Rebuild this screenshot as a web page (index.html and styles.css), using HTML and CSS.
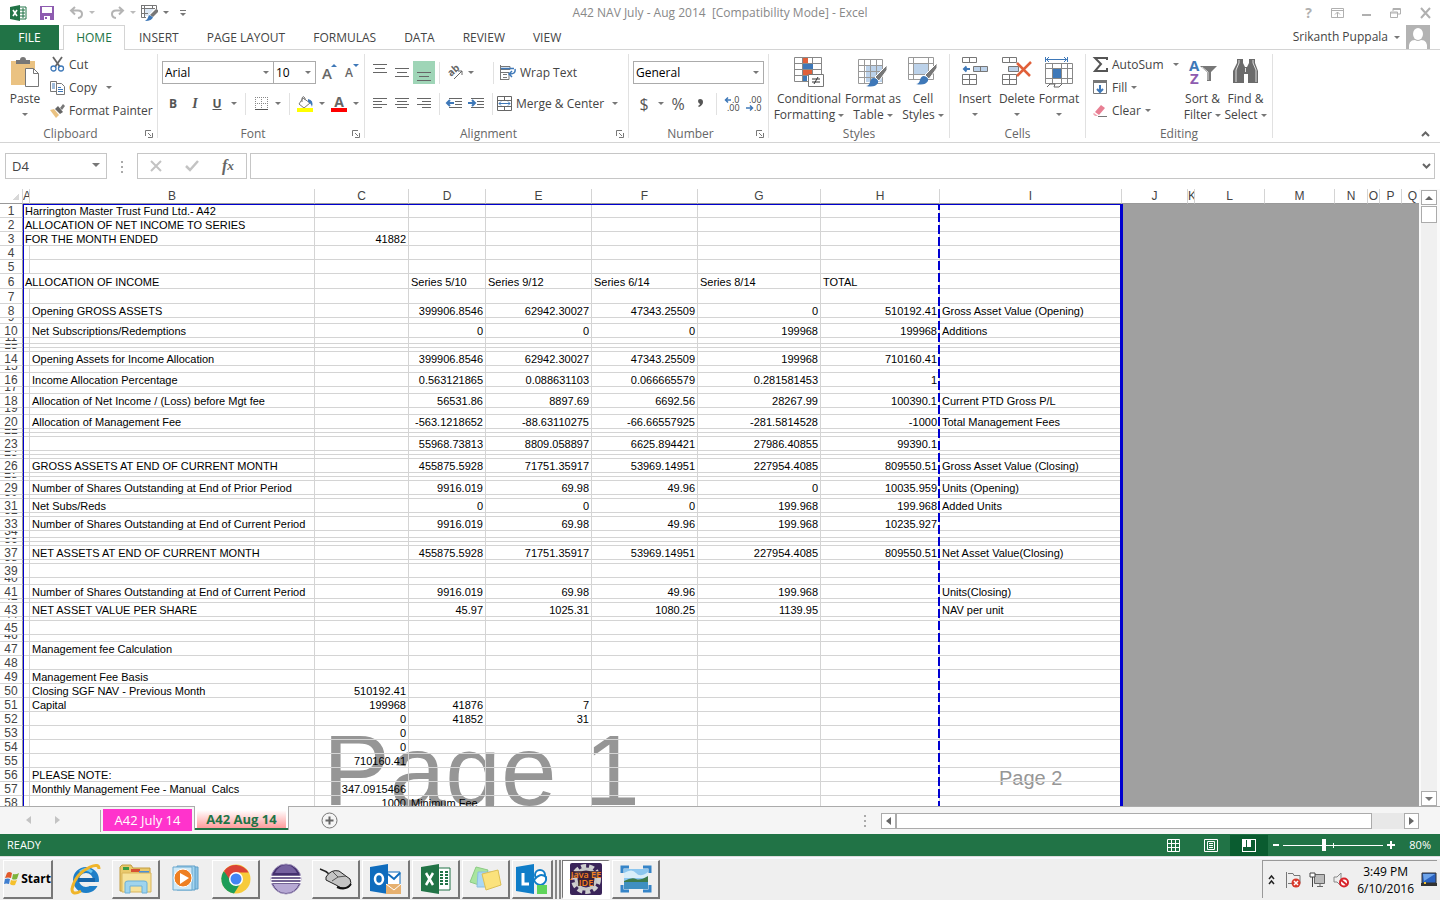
FILE: index.html
```html
<!DOCTYPE html>
<html lang="en">
<head>
<meta charset="utf-8">
<title>A42 NAV July - Aug 2014 - Excel</title>
<link rel="stylesheet" href="styles.css">
</head>
<body>
<header class="titlebar">
  <div class="quick">
    <svg class="xl" width="17" height="16" viewBox="0 0 17 16"><path d="M9 2h7v12H9z" fill="#fff" stroke="#217346"/><path d="M10 5h5M10 8h5M10 11h5M13 3v10" stroke="#217346"/><path d="M0 2l10-2v16L0 14z" fill="#217346"/><path d="M3 5l4 6M7 5l-4 6" stroke="#fff" stroke-width="1.6"/></svg>
    <button aria-label="Save"><svg width="14" height="14" viewBox="0 0 14 14"><path d="M0 0h14v14H0z" fill="#8e5cb0"/><path d="M2 1h10v6H2zM4 10h6v4H4z" fill="#fff"/><path d="M5 11h2v2H5z" fill="#8e5cb0"/></svg></button>
    <button class="dim" aria-label="Undo"><svg width="15" height="13" viewBox="0 0 15 13"><path d="M6 1L2 4.500l4 4M2 4.500h7q4 0 4 3.500t-4 4" fill="none" stroke="#b4b4b4" stroke-width="2"/></svg><i class="arrow pale"></i></button>
    <button class="dim" aria-label="Redo"><svg width="15" height="13" viewBox="0 0 15 13"><path d="M9 1l4 3.500-4 4M13 4.500H6q-4 0-4 3.500t4 4" fill="none" stroke="#b4b4b4" stroke-width="2"/></svg><i class="arrow pale"></i></button>
    <button class="tbl" aria-label="Table tool"><svg width="17" height="16" viewBox="0 0 17 16"><path d="M4 4h9l-6 7H4z" fill="#dce8f4"/><path d="M.5.500h15v4M.5 0v12.500H5M0 3.500h14M3.500 0v12M0 8.500h7M11.500 0v4" fill="none" stroke="#777"/><path d="M15 4l2 1v2l-5 5-3-2z" fill="#777"/><path d="M8 10l4 2q-1 4-8 4 3-2 4-6z" fill="#3e78b8"/></svg><i class="arrow"></i></button>
    <button class="more" aria-label="Customize toolbar"><span class="bar"></span><i class="arrow"></i></button>
  </div>
  <div class="title">A42 NAV July - Aug 2014&nbsp; [Compatibility Mode] - Excel</div>
  <div class="winbtns">
    <button aria-label="Help">?</button>
    <button aria-label="Ribbon options"><svg width="13" height="10" viewBox="0 0 13 10"><path d="M.5.5h12v9H.500zM.5 2.500h12M6.500 9V4M4 6.500L6.500 4 9 6.500" fill="none" stroke="#b0b0b0"/></svg></button>
    <button aria-label="Minimize"><svg width="10" height="10" viewBox="0 0 10 10"><path d="M0 6h9v2H0z" fill="#b0b0b0"/></svg></button>
    <button aria-label="Restore"><svg width="11" height="10" viewBox="0 0 11 10"><path d="M3 3V.5h7.500V6H8M.5 4h7v5.500h-7zM.5 5h7M3 1.500h7" fill="none" stroke="#b0b0b0"/></svg></button>
    <button aria-label="Close"><svg width="11" height="10" viewBox="0 0 11 10"><path d="M1 0l9 10M10 0L1 10" stroke="#b0b0b0" stroke-width="2"/></svg></button>
  </div>
</header>
<nav class="tabs">
  <button class="file">FILE</button>
  <button class="on">HOME</button>
  <button>INSERT</button>
  <button>PAGE LAYOUT</button>
  <button>FORMULAS</button>
  <button>DATA</button>
  <button>REVIEW</button>
  <button>VIEW</button>
  <div class="user"><span>Srikanth Puppala</span><i class="arrow"></i><svg width="24" height="24" viewBox="0 0 24 24"><path d="M0 0h24v24H0z" fill="#b3b3b3"/><ellipse cx="12" cy="9" rx="5" ry="6" fill="#fff"/><path d="M3 24q-1-9 6-9 3 2 6 0 7 0 6 9z" fill="#fff"/></svg></div>
</nav>
<section class="ribbon">
  <div class="group clip">
    <div class="gbody">
      <button class="big"><svg width="29" height="31" viewBox="0 0 29 31"><path d="M0 4h24v24H0z" fill="#eac282"/><path d="M5 3h4q0-3 3-3t3 3h4v4H5z" fill="#777"/><path d="M14.500 11.500h8l5 5v13h-13z" fill="#fff" stroke="#777"/><path d="M22.500 11.500v5h5" fill="none" stroke="#777"/></svg><span>Paste</span><i class="arrow"></i></button>
      <div class="stack">
        <button><svg width="15" height="15" viewBox="0 0 15 15"><path d="M3 0l7 10M12 0L5 10" stroke="#666" stroke-width="1.800"/><circle cx="3.500" cy="11.500" r="2.500" fill="none" stroke="#3e78b8" stroke-width="1.300"/><circle cx="11" cy="11.500" r="2.500" fill="none" stroke="#3e78b8" stroke-width="1.300"/></svg>Cut</button>
        <button><svg width="15" height="15" viewBox="0 0 15 15"><path d="M.5 1.500h6v10h-6z" fill="#fff" stroke="#777"/><path d="M2 4h3M2 6h3M2 8h3" stroke="#3e78b8"/><path d="M6.500 3.500h5l3 3v8h-8z" fill="#fff" stroke="#777"/><path d="M8 7.500h3M8 9.500h5M8 11.500h5" stroke="#3e78b8"/></svg>Copy<i class="arrow far"></i></button>
        <button><svg width="15" height="14" viewBox="0 0 15 14"><path d="M0 6l4-1 5 6-3 3z" fill="#eac282"/><path d="M5 5l3-3 5 6-3 2z" fill="#666"/><path d="M10 4l3-4 2 2-3 4z" fill="#777"/></svg>Format Painter</button>
      </div>
    </div>
    <div class="gfoot">Clipboard<svg class="launch" width="8" height="8" viewBox="0 0 8 8"><path d="M.5 6V.5H6M3 3l3 3M7.500 3v4.500H3" fill="none" stroke="#777"/></svg></div>
  </div>
  <div class="group font">
    <div class="gbody rows">
      <div class="line">
        <label class="pick w110"><select aria-label="Font"><option>Arial</option></select></label><label class="pick w43"><select aria-label="Font size"><option>10</option></select></label>
        <button class="grow" aria-label="Increase font size">A<i class="up"></i></button><button class="grow small" aria-label="Decrease font size">A<i class="dn"></i></button>
      </div>
      <div class="line">
        <button class="b22 bold">B</button><button class="b22 ital">I</button><button class="b22 und">U</button><button class="b12" aria-label="Underline style"><i class="arrow"></i></button><span class="sep"></span>
        <button class="b22" aria-label="Borders"><svg width="13" height="13" viewBox="0 0 13 13"><path d="M.5 0v12M6.500 0v12M12.500 0v12M0 .5h13M0 6.500h13" stroke="#888" stroke-dasharray="1 1"/><path d="M0 12.500h13" stroke="#555"/></svg></button><button class="b12" aria-label="Border style"><i class="arrow"></i></button><span class="sep slim"></span>
        <button class="b22" aria-label="Fill color"><svg width="17" height="16" viewBox="0 0 17 16"><path d="M6 2l7 5-6 5-5-4z" fill="#fff" stroke="#777"/><path d="M5 6V2q1-3 3 0v2" fill="none" stroke="#777"/><path d="M11 3q6 1 4 8-1-4-4-5z" fill="#3e78b8"/><path d="M0 12h16v4H0z" fill="#ff0"/></svg></button><button class="b12" aria-label="Fill colors"><i class="arrow"></i></button>
        <button class="b22 acol" aria-label="Font color"><b>A</b></button><button class="b12" aria-label="Font colors"><i class="arrow"></i></button>
      </div>
    </div>
    <div class="gfoot">Font<svg class="launch" width="8" height="8" viewBox="0 0 8 8"><path d="M.5 6V.5H6M3 3l3 3M7.500 3v4.500H3" fill="none" stroke="#777"/></svg></div>
  </div>
  <div class="group align">
    <div class="gbody rows">
      <div class="line">
        <button class="b22" aria-label="Top align"><svg width="14" height="18" viewBox="0 0 14 18"><path d="M0 .5h14M2 4.500h10M0 8.500h14" stroke="#666"/></svg></button><button class="b22" aria-label="Middle align"><svg width="14" height="18" viewBox="0 0 14 18"><path d="M0 4.500h14M2 8.500h10M0 12.500h14" stroke="#666"/></svg></button><button class="b22 sel" aria-label="Bottom align"><svg width="14" height="18" viewBox="0 0 14 18"><path d="M0 8.500h14M2 12.500h10M0 16.500h14" stroke="#666"/></svg></button><span class="sep near"></span>
        <button class="orient" aria-label="Orientation"><svg width="17" height="15" viewBox="0 0 17 15"><text x="4" y="12" transform="rotate(-42 4 12)" class="ab">ab</text><path d="M7 14L15 6M11 6h4v4" fill="none" stroke="#666"/></svg><i class="arrow"></i></button><span class="sep broad"></span>
        <button class="wide"><svg width="16" height="15" viewBox="0 0 16 15"><path d="M.5 0v15M1 1.500h9v3H1M1 7.500h8v7H1M3 9.500h4M3 12.500h4" fill="none" stroke="#777"/><path d="M1 3.500h13M15 4q1 5-5 5M12 6l-3 3 3 3" fill="none" stroke="#3e78b8" stroke-width="1.500"/></svg>Wrap Text</button>
      </div>
      <div class="line">
        <button class="b22" aria-label="Align left"><svg width="14" height="13" viewBox="0 0 14 13"><path d="M0 1.500h14M0 4.500h9M0 7.500h14M0 10.500h9" stroke="#666"/></svg></button><button class="b22" aria-label="Center"><svg width="14" height="13" viewBox="0 0 14 13"><path d="M0 1.500h14M2 4.500h10M0 7.500h14M2 10.500h10" stroke="#666"/></svg></button><button class="b22" aria-label="Align right"><svg width="14" height="13" viewBox="0 0 14 13"><path d="M0 1.500h14M5 4.500h9M0 7.500h14M5 10.500h9" stroke="#666"/></svg></button><span class="sep near"></span>
        <button class="b22" aria-label="Decrease indent"><svg width="16" height="13" viewBox="0 0 16 13"><path d="M3 1.500h13M9 4.500h7M9 7.500h7M3 10.500h13" stroke="#666"/><path d="M8 6H1M4 3L1 6l3 3" fill="none" stroke="#3e78b8" stroke-width="2"/></svg></button><button class="b22" aria-label="Increase indent"><svg width="16" height="13" viewBox="0 0 16 13"><path d="M3 1.500h13M9 4.500h7M9 7.500h7M3 10.500h13" stroke="#666"/><path d="M0 6h7M4 3l3 3-3 3" fill="none" stroke="#3e78b8" stroke-width="2"/></svg></button><span class="sep slim"></span>
        <button class="wide"><svg width="15" height="15" viewBox="0 0 15 15"><path d="M.5.500h14v14H.500zM.5 4.500h14M.5 10.500h14M7.500 0v4M7.500 11v4" fill="none" stroke="#666"/><path d="M2 7.500h11M4 5.500l-2 2 2 2M11 5.500l2 2-2 2" fill="none" stroke="#3e78b8"/></svg>Merge &amp; Center<i class="arrow far"></i></button>
      </div>
    </div>
    <div class="gfoot">Alignment<svg class="launch" width="8" height="8" viewBox="0 0 8 8"><path d="M.5 6V.5H6M3 3l3 3M7.500 3v4.500H3" fill="none" stroke="#777"/></svg></div>
  </div>
  <div class="group number">
    <div class="gbody rows">
      <div class="line"><label class="pick w131"><select aria-label="Number format"><option>General</option></select></label></div>
      <div class="line">
        <button class="b22 sym">$</button><button class="b12" aria-label="Currency"><i class="arrow"></i></button><button class="b22 sym">%</button><button class="b22" aria-label="Comma style"><svg width="6" height="10" viewBox="0 0 6 10"><path d="M1 2q0-2 2-2 3 0 3 3 0 3-4 5L1 7q2-1 2-2-2-1-2-3z" fill="#555"/></svg></button><span class="sep slim"></span>
        <button class="b22" aria-label="Increase decimal"><svg width="16" height="14" viewBox="0 0 16 14"><path d="M7 3H1M4 .5L1.500 3 4 5.500" fill="none" stroke="#3e78b8" stroke-width="1.500"/><text x="8" y="6" class="dec">.0</text><text x="3" y="14" class="dec">.00</text></svg></button><button class="b22" aria-label="Decrease decimal"><svg width="16" height="14" viewBox="0 0 16 14"><path d="M0 11h6M4 8.500L6.500 11 4 13.500" fill="none" stroke="#3e78b8" stroke-width="1.500"/><text x="3" y="6" class="dec">.00</text><text x="8" y="14" class="dec">.0</text></svg></button>
      </div>
    </div>
    <div class="gfoot">Number<svg class="launch" width="8" height="8" viewBox="0 0 8 8"><path d="M.5 6V.5H6M3 3l3 3M7.500 3v4.500H3" fill="none" stroke="#777"/></svg></div>
  </div>
  <div class="group styles">
    <div class="gbody">
      <button class="big w70"><svg width="30" height="31" viewBox="0 0 30 31"><path d="M.5.5h27v24H.500zM.5 6.500h27M.5 12.500h27M.5 18.500h27M8.500 0v24M18.500 0v24" fill="#fff" stroke="#888"/><path d="M9 1h5v5H9zM9 13h9v5H9z" fill="#e0603a"/><path d="M9 7h10v5H9zM9 19h4v5H9z" fill="#3e78b8"/><path d="M14.500 17.500h15v12h-15z" fill="#fff" stroke="#777"/><path d="M18 22h8M18 25h8M24 20l-4 7" stroke="#333"/></svg><span>Conditional<br>Formatting <i class="arrow"></i></span></button>
      <button class="big w58"><svg width="30" height="31" viewBox="0 0 30 31"><path d="M8 8h17v17H8z" fill="#bcd2ea"/><path d="M.5 2.500h24v24H.500zM.5 8.500h24M.5 14.500h24M.5 20.500h24M6.500 3v23M12.500 3v23M18.500 3v23" fill="none" stroke="#999"/><path d="M29 8v5l-8 11-4-4z" fill="#777" stroke="#fff"/><path d="M16 21q5 1 4 5-3 5-12 3 3 0 4-4 1-4 4-4z" fill="#3e78b8"/></svg><span>Format as<br>Table <i class="arrow"></i></span></button>
      <button class="big w42"><svg width="30" height="31" viewBox="0 0 30 31"><path d="M6 7h14v10H6z" fill="#bcd2ea"/><path d="M.5.5h25v22H.500zM.5 6.500h25M.5 17.500h25M5.500 0v22M20.500 0v22" fill="none" stroke="#999"/><path d="M29 6v5l-8 11-4-4z" fill="#777" stroke="#fff"/><path d="M16 19q5 1 4 5-3 5-12 3 3 0 4-4 1-4 4-4z" fill="#3e78b8"/></svg><span>Cell<br>Styles <i class="arrow"></i></span></button>
    </div>
    <div class="gfoot">Styles</div>
  </div>
  <div class="group cells">
    <div class="gbody">
      <button class="big w42"><svg width="28" height="31" viewBox="0 0 28 31"><path d="M1.500.500h14v5h-14zM8.500.500v5M1.500 17.500h14v10h-14zM1.500 22.500h14M8.500 17.500v10" fill="none" stroke="#777"/><path d="M12.500 9.500h14v5h-14zM19.500 9.500v5" fill="#bcd2ea" stroke="#777"/><path d="M9 12H3M5.500 9.500L3 12l2.500 2.500" fill="none" stroke="#3e78b8" stroke-width="2"/></svg><span>Insert</span><i class="arrow"></i></button>
      <button class="big w42"><svg width="30" height="31" viewBox="0 0 30 31"><path d="M.5.500h14v5h-14zM7.500.500v5M.5 17.500h14v10h-14zM.5 22.500h14M7.500 17.500v10" fill="none" stroke="#777"/><path d="M6.500 9.500h10v5h-10z" fill="#bcd2ea" stroke="#777"/><path d="M15 6l13 13M29 5L15 19" stroke="#e0603a" stroke-width="2.500"/></svg><span>Delete</span><i class="arrow"></i></button>
      <button class="big w42"><svg width="28" height="31" viewBox="0 0 28 31"><path d="M.5 0v5M22.500 0v5M1 2.500h21M4 0L1.500 2.500 4 5M19 0l2.500 2.500L19 5" fill="none" stroke="#3e78b8"/><path d="M.5 6.500h27v20H.500zM.5 11.500h27M.5 21.500h27M7.500 7v20M16.500 7v20M22.500 7v20" fill="none" stroke="#888"/><path d="M8 12h8v9H8z" fill="#3e78b8"/><path d="M2 30l3-3h5l-1 3h5l3-3" fill="none" stroke="#666"/></svg><span>Format</span><i class="arrow"></i></button>
    </div>
    <div class="gfoot">Cells</div>
  </div>
  <div class="group editing">
    <div class="gbody">
      <div class="stack">
        <button><svg width="15" height="15" viewBox="0 0 15 15"><path d="M14 3V1H2l6 6-6 7h12v-3" fill="none" stroke="#555" stroke-width="2"/></svg>AutoSum<i class="arrow far"></i></button>
        <button><svg width="15" height="15" viewBox="0 0 15 15"><path d="M.5.500h13v13H.500z" fill="#fff" stroke="#777"/><path d="M0 0h14v3H0z" fill="#777"/><path d="M7 5v7M4 9l3 3 3-3" fill="none" stroke="#3e78b8" stroke-width="2"/></svg>Fill<i class="arrow"></i></button>
        <button><svg width="15" height="14" viewBox="0 0 15 14"><path d="M8 1l4 3-6 7-4-3z" fill="#e87f93"/><path d="M1 9l4 3H2L0 10z" fill="#f0a5b2"/><path d="M5 12.500h9" stroke="#777"/></svg>Clear<i class="arrow"></i></button>
      </div>
      <button class="big w42"><svg width="30" height="31" viewBox="0 0 30 31"><text x="1" y="14" class="sa">A</text><text x="2" y="27" class="sz">Z</text><path d="M12 9h17l-6 6v9h-4v-9z" fill="#777"/><path d="M14 10l6 5v8" fill="none" stroke="#ddd"/></svg><span>Sort &amp;<br>Filter <i class="arrow"></i></span></button>
      <button class="big w42"><svg width="28" height="31" viewBox="0 0 28 31"><path d="M5 2h6v4l2 4h2l2-4V2h6v4l3 8v12H16v-9h-4v9H1V14l4-8z" fill="#6b6b6b"/><path d="M7 3v3l-3 7v12M21 3v3l3 7v12M13.500 11v4" stroke="#ddd" fill="none"/></svg><span>Find &amp;<br>Select <i class="arrow"></i></span></button>
    </div>
    <div class="gfoot">Editing</div>
  </div>
  <button class="collapse" aria-label="Collapse ribbon"><svg width="9" height="6" viewBox="0 0 9 6"><path d="M1 5l3.500-3.500L8 5" fill="none" stroke="#666" stroke-width="2"/></svg></button>
</section>
<section class="formula">
  <label class="name pick"><select aria-label="Name box"><option>D4</option></select></label>
  <span class="dots"></span>
  <div class="fx"><button aria-label="Cancel"><svg width="12" height="12" viewBox="0 0 12 12"><path d="M1 1l10 10M11 1L1 11" stroke="#c3c3c3" stroke-width="2"/></svg></button><button aria-label="Enter"><svg width="14" height="12" viewBox="0 0 14 12"><path d="M1 6l4 4 8-9" fill="none" stroke="#c3c3c3" stroke-width="2.500"/></svg></button><button class="f" aria-label="Insert function">f<small>x</small></button></div>
  <div class="entry"><input type="text" aria-label="Formula"><svg width="9" height="6" viewBox="0 0 9 6"><path d="M1 1l3.500 3.500L8 1" fill="none" stroke="#666" stroke-width="2"/></svg></div>
</section>
<main class="sheet">
  <div class="view">
    <div class="mark one">Page 1</div>
    <div class="mark two">Page 2</div>
    <table>
      <colgroup><col class="c-n"><col class="c-a"><col class="c-b"><col class="c-c"><col class="c-d"><col class="c-e"><col class="c-e"><col class="c-g"><col class="c-h"><col class="c-i"><col class="c-j"><col class="c-a"><col class="c-l"><col class="c-l"><col class="c-nn"><col class="c-o"><col class="c-p"><col class="c-p"></colgroup>
      <thead><tr><th class="corner"></th><th>A</th><th>B</th><th>C</th><th>D</th><th>E</th><th>F</th><th>G</th><th>H</th><th>I</th><th>J</th><th>K</th><th>L</th><th>M</th><th>N</th><th>O</th><th>P</th><th>Q</th></tr></thead>
      <tbody id="rows"></tbody>
    </table>
    <div class="pageframe"></div>
    <div class="pagebreak"></div>
  </div>
  <div class="vscroll"><button aria-label="Scroll up"><i class="arrow flip"></i></button><span class="thumb"></span><span class="track"></span><button aria-label="Scroll down"><i class="arrow"></i></button></div>
</main>
<section class="sheettabs">
  <div class="navs"><i class="left"></i><i class="right"></i></div>
  <button class="t1">A42 July 14</button>
  <button class="t2"><span>A42 Aug 14</span></button>
  <button class="add" aria-label="New sheet"><svg width="17" height="17" viewBox="0 0 17 17"><circle cx="8.500" cy="8.500" r="7.500" fill="none" stroke="#777"/><path d="M4.500 8.500h8M8.500 4.500v8" stroke="#666" stroke-width="2"/></svg></button>
  <span class="dots"></span>
  <div class="hscroll"><button aria-label="Scroll left"><i class="left dark"></i></button><span class="thumb"></span><span class="track"></span><button aria-label="Scroll right"><i class="right dark"></i></button></div>
</section>
<section class="status">
  <span>READY</span>
  <div class="views">
    <button aria-label="Normal"><svg width="13" height="13" viewBox="0 0 13 13"><path d="M.5.500h12v12H.500zM.5 4.500h12M.5 8.500h12M4.500 0v13M8.500 0v13" fill="none" stroke="#fff"/></svg></button>
    <button aria-label="Page layout"><svg width="14" height="13" viewBox="0 0 14 13"><path d="M.5.500h13v12H.500zM3.500 2.500h7v8h-7zM5 4.500h4M5 6.500h4M5 8.500h4" fill="none" stroke="#fff"/></svg></button>
    <button class="on" aria-label="Page break preview"><svg width="14" height="13" viewBox="0 0 14 13"><path d="M0 0h14v13H0z" fill="#fff"/><path d="M4 1h1v7H4zM9 1h4v7H9zM1 8h12v4H1z" fill="#0a5c30"/></svg></button>
  </div>
  <div class="zoom"><b class="minus"></b><input type="range" min="0" max="100" value="40" aria-label="Zoom"><b class="plus"></b></div>
  <span class="pct">80%</span>
</section>
<footer class="taskbar">
  <button class="start"><svg width="16" height="16" viewBox="0 0 16 16"><path d="M3 2q2-2 5 0L7 7Q4 6 1 7z" fill="#e25a2c"/><path d="M9 3q3 1 6-1l-2 6q-3 1-5 0z" fill="#7db43c"/><path d="M1 8q3-1 5 0l-1 5q-3-1-5 0z" fill="#3f7fd0"/><path d="M7 9q3 1 6 0l-2 5q-3 1-5-1z" fill="#f5c02c"/></svg>Start</button>
  <button class="task plain" aria-label="Internet Explorer"><svg width="30" height="32" viewBox="0 0 30 32"><circle cx="15" cy="17" r="10" fill="none" stroke="#1e7fc8" stroke-width="6"/><path d="M7 15h17v4H7z" fill="#1764a8"/><path d="M18 19h12v4H18z" fill="#efefef"/><path d="M9 9q6-5 12 0" fill="none" stroke="#67c4f0" stroke-width="3"/><path d="M28 6q0-6-9-2Q4 11 1 26q0 7 9 2" fill="none" stroke="#f0b52a" stroke-width="3"/></svg></button>
  <button class="task" aria-label="Explorer"><svg width="34" height="32" viewBox="0 0 34 32"><path d="M1 4l2-2h9l2 3h17v23H1z" fill="#e9c96c" stroke="#c29c3e"/><path d="M4 4h6v3H4z" fill="#3a9c44"/><path d="M12 6h9v3h-9z" fill="#d85032"/><path d="M20 8h10v3H20z" fill="#4a90d8"/><path d="M3 10h29v19H3z" fill="#f6e29a" stroke="#d9b55c"/><path d="M6 30V20q0-2 3-2h16q3 0 3 2v10h-5v-7H11v7z" fill="#9fd4ee" stroke="#6cb0d8"/></svg></button>
  <button class="task plain" aria-label="Media Player"><svg width="32" height="28" viewBox="0 0 32 28"><path d="M10 2h18v22H10z" fill="#8cc4e6" stroke="#5f9fc8"/><path d="M7 1h18v24H7z" fill="#a5d5ef" stroke="#5f9fc8"/><path d="M3 2h19v23H3z" fill="#cfe9f7" stroke="#6ba9cf"/><circle cx="13" cy="13" r="9" fill="#ee7f22" stroke="#fff"/><path d="M10 8l9 5-9 6z" fill="#fff"/></svg></button>
  <button class="task" aria-label="Chrome"><svg width="30" height="30" viewBox="0 0 30 30"><circle cx="15" cy="15" r="14.500" fill="#f7cb3b"/><path d="M15 15L2.500 7.500A14.500 14.500 0 0 0 13 29.500l7-11z" fill="#1d9d58"/><path d="M15 8.500h12.500A14.500 14.500 0 0 0 3 7l6 9z" fill="#db4437"/><circle cx="15" cy="15" r="7" fill="#fff"/><circle cx="15" cy="15" r="5.500" fill="#4285f4"/></svg></button>
  <button class="task plain" aria-label="Eclipse"><svg width="32" height="32" viewBox="0 0 32 32"><circle cx="16" cy="16" r="15" fill="#44306f" stroke="#a79bc0"/><path d="M5 10q4-8 11-8t11 8z" fill="#75619f"/><path d="M3 21h26q-4 9-13 9T3 21z" fill="#b7a9d4"/><path d="M1 13.500h30M1 16.500h30M1 19.500h30" stroke="#fff" stroke-width="1.500"/></svg></button>
  <button class="task" aria-label="Mouse"><svg width="34" height="24" viewBox="0 0 34 24"><path d="M1 2q6 2 9 5" fill="none" stroke="#222" stroke-width="1.500"/><path d="M7 10q5-8 13-6l11 8q3 8-5 9-4 1-9-3L7 13z" fill="#c4c4c4" stroke="#222"/><path d="M13 14l6-4M14 5l5 5 8-1" fill="none" stroke="#555"/><path d="M18 20q9 4 14-3" fill="none" stroke="#111" stroke-width="2"/></svg></button>
  <button class="task" aria-label="Outlook"><svg width="32" height="30" viewBox="0 0 32 30"><path d="M17 8h13v13H17z" fill="#fff" stroke="#0f6cbd"/><path d="M18 10l6 5 6-6" fill="none" stroke="#0f6cbd" stroke-width="2"/><path d="M0 3l18-3v30L0 27z" fill="#0f6cbd"/><ellipse cx="9" cy="15" rx="4" ry="5" fill="none" stroke="#fff" stroke-width="2.500"/><path d="M16 20h15v10H16z" fill="#e6b06f"/><path d="M16 20l8 6 7-6" fill="none" stroke="#fff"/></svg></button>
  <button class="task" aria-label="Excel"><svg width="30" height="30" viewBox="0 0 30 30"><path d="M15 4h14v22H15z" fill="#fff" stroke="#217346"/><path d="M19 8h3M24 8h3M19 11h3M24 11h3M19 14h3M24 14h3M19 17h3M24 17h3M19 20h3M24 20h3" stroke="#217346" stroke-width="2"/><path d="M0 3l18-3v30L0 27z" fill="#217346"/><path d="M5 9l7 12M12 9L5 21" stroke="#fff" stroke-width="2.500"/></svg></button>
  <button class="task" aria-label="Sticky notes"><svg width="34" height="26" viewBox="0 0 34 26"><path d="M7 1l12 3-6 16-12-4z" fill="#a9e5a0" stroke="#8ccb84"/><path d="M9 6h13v15H8z" fill="#a9d8f5" stroke="#8dbfe0"/><path d="M13 8l16-4 3 15-15 5z" fill="#fbe27c" stroke="#dcbf55"/></svg></button>
  <button class="task pile" aria-label="Lync"><svg width="32" height="30" viewBox="0 0 32 30"><circle cx="24" cy="11" r="5" fill="#fff" stroke="#0f7dc8" stroke-width="2"/><path d="M18 16q2 5 7 5 6-2 5-8-6-5-12 3z" fill="#fff" stroke="#0f7dc8" stroke-width="2"/><path d="M0 3l18-3v30L0 27z" fill="#0f7dc8"/><path d="M7 9v11h6" fill="none" stroke="#fff" stroke-width="3"/><path d="M21 21h10v9H21z" fill="#5fd45a"/></svg></button>
  <button class="task pressed" aria-label="Java EE IDE"><svg width="34" height="32" viewBox="0 0 34 32"><rect x="1" width="32" height="32" rx="2" fill="#3a2459"/><circle cx="17" cy="16" r="13" fill="none" stroke="#d0d0d0" stroke-width="4" stroke-dasharray="5 3"/><circle cx="17" cy="16" r="10" fill="none" stroke="#c8c8c8" stroke-width="3"/><path d="M2 8h30v7H2zM9 15h16v8H9z" fill="#3a2030" opacity=".8"/><text x="17" y="15" class="jee">Java EE</text><text x="17" y="23" class="jee">IDE</text></svg></button>
  <button class="task" aria-label="Pictures"><svg width="30" height="26" viewBox="0 0 30 26"><path d="M1 7V1h7M22 1h7v6M29 19v6h-7M8 25H1v-6" fill="none" stroke="#3584c8" stroke-width="3"/><path d="M3 3h24v20H3z" fill="#8cc6ef"/><path d="M3 7q8-5 12 0t12-1v6H3z" fill="#d8edf9"/><path d="M3 15q8-4 12-2t12-3v6H3z" fill="#3d7a4a"/><path d="M3 16h24v7H3z" fill="#3f8fc0"/></svg></button>
  <div class="tray">
    <svg width="7" height="10" viewBox="0 0 7 10"><path d="M1 4l2.500-3L6 4M1 9l2.500-3L6 9" fill="none" stroke="#222" stroke-width="1.500"/></svg>
    <svg class="flag" width="17" height="16" viewBox="0 0 17 16"><path d="M1.500 0v16M3 1.500h5l1 2h6v8H3" fill="none" stroke="#777"/><circle cx="11" cy="11" r="4.500" fill="#d8392b"/><path d="M9 9l4 4M13 9l-4 4" stroke="#fff" stroke-width="1.500"/></svg>
    <svg width="17" height="16" viewBox="0 0 17 16"><path d="M5.500 2.500h10v9h-10z" fill="#bbb" stroke="#666"/><path d="M8 14.500h6M11 12v2" fill="none" stroke="#666"/><path d="M1 1h5v4H1zM3.500 5v10" fill="#fff" stroke="#444"/></svg>
    <svg width="17" height="16" viewBox="0 0 17 16"><path d="M1 5h3l4-4v13l-4-4H1z" fill="#eee" stroke="#888"/><circle cx="11" cy="10.500" r="4" fill="#fff" stroke="#d8242b" stroke-width="2"/><path d="M8 8l6 5" stroke="#d8242b" stroke-width="2"/></svg>
    <div class="clock">3:49 PM<br>6/10/2016</div>
    <svg width="16" height="13" viewBox="0 0 16 13"><path d="M1 0h14v10H1z" fill="#2a62c0" stroke="#333"/><path d="M2 1h12L3 8z" fill="#6ea4ea"/><path d="M0 10h16v3H0z" fill="#333"/><path d="M3 9h2v2H3z" fill="#f2c230"/></svg>
  </div>
</footer>
<script src="sheet.js"></script>
</body>
</html>
```
FILE: styles.css
```css
* { box-sizing: border-box; }
html, body { height: 100%; }
body {
  margin: 0; display: flex; flex-direction: column; overflow: hidden; background: #fff; color: #444;
  font: 12px/16px "Open Sans", "Noto Sans", sans-serif;
}
button { border: 0; background: none; padding: 0; margin: 0; font: inherit; color: inherit; display: flex; align-items: center; justify-content: center; white-space: nowrap; }
svg { flex: none; display: block; overflow: visible; }
select, input { font: inherit; color: #000; border: 0; background: none; outline: 0; margin: 0; padding: 0; }
.arrow { display: inline-block; flex: none; width: 0; height: 0; border: 3px solid transparent; border-top-color: #777; border-bottom: 0; vertical-align: middle; }
.arrow.pale { border-top-color: #bbb; }
.arrow.flip { border: 4px solid transparent; border-bottom-color: #666; border-top: 0; }
.left, .right { width: 0; height: 0; border: 4px solid transparent; }
.left { border-right: 5px solid #c3c3c3; border-left: 0; }
.right { border-left: 5px solid #c3c3c3; border-right: 0; }
.left.dark { border-right-color: #666; }
.right.dark { border-left-color: #666; }

.titlebar { display: grid; grid-template-columns: 1fr auto 1fr; height: 25px; align-items: center; flex: none; }
.quick { display: flex; align-items: center; padding-left: 10px; height: 22px; }
.quick .xl { margin-right: 13px; }
.quick button { margin-right: 15px; gap: 5px; }
.quick .dim { width: 26px; }
.quick .dim + .tbl { margin: 0 11px 0 -10px; }
.quick .more { flex-direction: column; gap: 2px; }
.quick .bar { width: 6px; height: 1px; background: #777; }
.title { color: #888; }
.winbtns { display: flex; justify-content: flex-end; padding-right: 4px; height: 22px; color: #b0b0b0; font-weight: 700; font-size: 14px; }
.winbtns button { width: 29px; }
.winbtns button:last-child { width: 22px; margin-left: 4px; }

.tabs { display: flex; height: 25px; flex: none; border-bottom: 1px solid #d4d4d4; }
.tabs button { height: 25px; margin-right: 28px; }
.tabs .file { background: #217346; color: #fff; width: 59px; margin-right: 4px; }
.tabs .on { border: 1px solid #d4d4d4; border-bottom: 0; background: #fff; color: #217346; width: 62px; margin-right: 14px; }
.user { margin-left: auto; display: flex; align-items: center; gap: 6px; padding-right: 10px; }

.ribbon { display: flex; height: 93px; flex: none; border-bottom: 1px solid #d4d4d4; position: relative; }
.group { display: flex; flex-direction: column; flex: none; margin: 4px 0; border-right: 1px solid #e1e1e1; height: 84px; }
.clip { width: 158px; }
.font { width: 207px; }
.align { width: 264px; }
.number { width: 140px; }
.styles { width: 181px; }
.cells { width: 136px; }
.editing { width: 187px; }
.gbody { display: flex; height: 72px; flex: none; }
.gfoot { height: 16px; line-height: 16px; text-align: center; color: #666; padding-right: 16px; position: relative; }
.styles .gfoot, .cells .gfoot, .editing .gfoot { padding-right: 0; }
.launch { position: absolute; right: 4px; top: 4px; }
.big { flex-direction: column; justify-content: flex-start; width: 42px; padding-top: 3px; margin: 0 4px; text-align: center; }
.big span { margin-top: 3px; }
.big > .arrow { margin-top: 6px; }
.stack { display: flex; flex-direction: column; margin-top: -1px; }
.stack button { height: 23px; justify-content: flex-start; gap: 4px; }
.stack .far { margin-left: 5px; }
.clip .big { margin: 0 4px; }
.rows { flex-direction: column; padding-top: 7px; }
.line { display: flex; align-items: center; height: 23px; margin-bottom: 8px; }
.b22 { width: 22px; height: 23px; }
.b12 { width: 12px; height: 22px; }
.sep { width: 1px; height: 22px; background: #e1e1e1; margin: 0 4px 0 5px; }
.sep.slim { margin: 0 4px 0 5px; }
.sep.near { margin: 0 3px 0 4px; }
.sep.broad { margin: 0 6px 0 16px; }
.font .rows, .align .rows, .number .rows { padding-left: 4px; }
.pick { position: relative; border: 1px solid #ababab; display: block; height: 23px; }
.pick::after { content: ""; position: absolute; right: 4px; top: 9px; border: 3px solid transparent; border-top-color: #777; border-bottom: 0; pointer-events: none; }
.pick select { appearance: none; width: 100%; height: 21px; padding-left: 2px; display: block; }
.w110 { width: 112px; }
.w43 { width: 43px; margin-left: -1px; }
.w42 { width: 43px; }
.w131 { width: 131px; }
.grow { position: relative; width: 22px; font-size: 15px; font-weight: 600; color: #666; }
.grow.small { font-size: 12px; }
.up, .dn { position: absolute; right: 1px; top: -1px; border: 3px solid transparent; }
.up { border-bottom-color: #3e78b8; border-top: 0; }
.dn { border-top-color: #3e78b8; border-bottom: 0; }
.bold { font-weight: 700; color: #555; }
.ital { font: italic 700 14px "Liberation Serif", serif; color: #555; }
.und { font-weight: 700; text-decoration: underline; color: #555; }
.acol { flex-direction: column; color: #666; font-size: 14px; line-height: 12px; }
.acol::after { content: ""; width: 16px; height: 4px; background: #f00; }
.sel { background: #9fd5b7; }
.orient { width: 34px; gap: 4px; }
.ab { font: 700 10px "Open Sans", sans-serif; fill: #666; }
.dec { font: 9px "Open Sans", sans-serif; fill: #444; }
.wide { gap: 4px; }
.wide .far { margin-left: 4px; }
.sym { font-size: 16px; color: #555; }
.w70 { width: 72px; }
.w58 { width: 56px; }
.styles .big { margin: 0; }
.styles .w70 { margin: 0 0 0 4px; }
.styles .w42 { width: 44px; }
.cells .big { margin: 0; }
.cells .w42 { width: 42px; }
.cells .gbody { padding-left: 4px; }
.editing .stack { margin-left: 7px; width: 88px; }
.editing .big { margin: 0; }
.sa { font: 700 15px "Open Sans", sans-serif; fill: #3e78b8; }
.sz { font: 700 15px "Open Sans", sans-serif; fill: #8e5cb0; }
.collapse { position: absolute; right: 10px; bottom: 5px; }

.formula { display: flex; height: 46px; padding: 10px 5px; flex: none; }
.formula .name { width: 102px; height: 26px; border-color: #c6c6c6; }
.name select { height: 24px; padding-left: 6px; font-size: 13px; color: #444; }
.name.pick::after { right: 6px; border-width: 4px 4px 0; }
.dots { width: 2px; height: 12px; margin: 8px 14px; background: repeating-linear-gradient(#aaa 0 2px, transparent 2px 5px); }
.fx { display: flex; width: 110px; height: 26px; border: 1px solid #c6c6c6; margin-right: 3px; }
.fx button { flex: 1; }
.fx .f { font: italic 700 16px "Liberation Serif", serif; color: #666; }
.entry { flex: 1; display: flex; align-items: center; border: 1px solid #c6c6c6; height: 26px; padding-right: 3px; }
.entry input { flex: 1; height: 24px; padding-left: 4px; }

.sheet { flex: 1; display: flex; min-height: 0; }
.view { flex: 1; position: relative; overflow: hidden; isolation: isolate; font: 11px/14px "Liberation Sans", Arial, sans-serif; color: #000; }
table { border-collapse: separate; border-spacing: 0; table-layout: fixed; width: 1424px; }
.c-n { width: 23px; } .c-a { width: 7px; } .c-b { width: 285px; } .c-c { width: 94px; } .c-d { width: 77px; }
.c-e { width: 106px; } .c-g { width: 123px; } .c-h { width: 119px; } .c-i { width: 182px; } .c-j { width: 66px; }
.c-l { width: 70px; } .c-nn { width: 33px; } .c-o { width: 12px; } .c-p { width: 22px; }
th, td { padding: 0; overflow: hidden; white-space: nowrap; font-weight: 400; border-right: 1px solid #d4d4d4; border-bottom: 1px solid #d4d4d4; }
thead th { height: 15px; line-height: 14px; font-size: 12px; color: #444; border-bottom-color: #999; }
.corner { background: linear-gradient(135deg, transparent 50%, #d8d8d8 50%) no-repeat right 3px bottom 3px / 7px 7px; }
tbody th { color: #444; font-size: 12px; border-right-color: #999; }
tbody th div { display: flex; align-items: flex-end; justify-content: center; overflow: hidden; line-height: 12px; }
tbody td { line-height: 12px; text-align: right; padding: 1px 2px 0; }
td.t { text-align: left; }
td.z { font-size: 0; line-height: 0; padding: 0; }
td.off { background: #a0a0a0; border: 0; padding: 0; }
.pageframe { position: absolute; left: 23px; top: 15px; width: 1100px; bottom: 0; border: solid #0000d0; border-width: 1px 3px 0 1px; pointer-events: none; }
.pagebreak { position: absolute; left: 938px; top: 15px; width: 2px; bottom: 0; background: repeating-linear-gradient(#0000d0 0 6px, transparent 6px 9px, #0000d0 9px 12px); }
.mark { position: absolute; z-index: -1; color: #969696; }
.one { left: 323px; bottom: -22px; font-size: 100px; line-height: 115px; }
.two { left: 999px; bottom: 16px; font-size: 20px; line-height: 24px; }
.vscroll { width: 21px; display: flex; flex-direction: column; padding: 1px 3px 0 2px; background: #fafafa; }
.vscroll button, .vscroll .thumb { height: 15px; border: 1px solid #ababab; background: #fff; flex: none; }
.vscroll .thumb { height: 17px; margin-top: 1px; }
.vscroll .track { flex: 1; background: #f0f0f0; }
.vscroll .arrow:not(.flip) { border-width: 4px 4px 0; }

.sheettabs { display: flex; height: 28px; flex: none; background: #f5f5f5; border-top: 1px solid #ababab; }
.navs { width: 101px; display: flex; align-items: center; gap: 24px; padding: 0 0 2px 26px; border-right: 1px solid #ababab; height: 22px; margin: 3px 2px 0 0; }
.t1 { width: 89px; height: 22px; background: #ff33cc; color: #fff; margin: 2px 2px 0 0; }
.t2 { width: 95px; height: 24px; background: #fff; border: solid #ababab; border-width: 0 1px; padding: 2px 2px 1px; box-shadow: inset 0 -2px #217346; margin-top: -1px; }
.t2 span { display: block; width: 100%; height: 18px; line-height: 18px; background: linear-gradient(#fff, #ff9c9c); color: #217346; font-weight: 700; }
.t1, .t2 { font-size: 13px; }
.add { margin-left: 32px; height: 26px; }
.sheettabs .dots { margin: 8px 0 0 auto; }
.hscroll { display: flex; width: 538px; height: 16px; margin: 6px 21px 0 15px; background: #e8e8e8; flex: none; }
.hscroll button { width: 15px; border: 1px solid #ababab; background: #fff; }
.hscroll .thumb { width: 476px; border: 1px solid #ababab; background: #fff; }
.hscroll .track { flex: 1; }

.status { display: flex; height: 22px; flex: none; background: #217346; color: #fff; align-items: center; padding: 0 9px 0 7px; font-size: 11px; }
.views { margin-left: auto; display: flex; height: 21px; }
.views button { width: 38px; }
.views .on { background: #0a5c30; }
.zoom { display: flex; align-items: center; gap: 4px; margin: 0 14px 0 5px; }
.minus { width: 6px; height: 2px; background: #fff; }
.plus { width: 8px; height: 8px; background: linear-gradient(#fff, #fff) center / 8px 2px no-repeat, linear-gradient(#fff, #fff) center / 2px 8px no-repeat; }
.zoom input { appearance: none; width: 100px; height: 12px; background: linear-gradient(#fff, #fff) center / 100px 1px no-repeat, linear-gradient(#fff, #fff) center / 1px 5px no-repeat; }
.zoom input::-webkit-slider-thumb { appearance: none; width: 4px; height: 12px; background: #fff; }

.taskbar { display: flex; height: 44px; flex: none; background: #efefef; border-top: 1px solid #ddd; padding: 3px 3px 1px; color: #000; align-items: flex-start; box-shadow: inset 0 2px #f8f8ff; }
.start, .task { height: 39px; width: 48px; border: 1px solid; border-color: #fff #777 #777 #fff; border-right-width: 2px; border-bottom-width: 2px; margin-right: 2px; flex: none; }
.start { width: 50px; margin-right: 9px; font-weight: 700; gap: 1px; font-size: 12px; }
.task.plain { border-color: transparent; }
.task.pile { width: 41px; margin-right: 9px; box-shadow: 2px 0 #efefef, 4px 0 #888, 6px 0 #efefef, 8px 0 #888; }
.task.pressed { background: #fff; border-color: #777 #fff #fff #777; }
.jee { font: 600 9px "Open Sans", sans-serif; fill: #f58220; text-anchor: middle; }
.tray { margin-left: auto; display: flex; align-items: center; height: 38px; border: solid #999; border-width: 1px 0 0 1px; padding-left: 5px; gap: 7px; }
.tray .flag { margin-left: 3px; }
.clock { text-align: center; line-height: 17px; }
```
FILE: sheet.js
```js
const names = 'ABCDEFGHI';
const heights = {
  6: 15, 7: 15, 9: 6, 11: 6, 12: 4, 13: 4, 15: 7, 17: 7, 19: 7, 21: 4, 22: 4, 24: 4, 25: 4, 27: 4, 28: 4,
  30: 4, 32: 4, 34: 7, 35: 4, 36: 4, 38: 4, 40: 7, 42: 4, 44: 4, 46: 7
};
const cells = {
  1: { A: 'Harrington Master Trust Fund Ltd.- A42' },
  2: { A: 'ALLOCATION OF NET INCOME TO SERIES' },
  3: { A: 'FOR THE MONTH ENDED', C: '41882' },
  6: { A: 'ALLOCATION OF INCOME', D: 'Series 5/10', E: 'Series 9/12', F: 'Series 6/14', G: 'Series 8/14', H: 'TOTAL' },
  8: { B: 'Opening GROSS ASSETS', D: '399906.8546', E: '62942.30027', F: '47343.25509', G: '0', H: '510192.41', I: 'Gross Asset Value (Opening)' },
  10: { B: 'Net Subscriptions/Redemptions', D: '0', E: '0', F: '0', G: '199968', H: '199968', I: 'Additions' },
  14: { B: 'Opening Assets for Income Allocation', D: '399906.8546', E: '62942.30027', F: '47343.25509', G: '199968', H: '710160.41' },
  16: { B: 'Income Allocation Percentage', D: '0.563121865', E: '0.088631103', F: '0.066665579', G: '0.281581453', H: '1' },
  18: { B: 'Allocation of Net Income / (Loss) before Mgt fee', D: '56531.86', E: '8897.69', F: '6692.56', G: '28267.99', H: '100390.1', I: 'Current PTD Gross P/L' },
  20: { B: 'Allocation of Management Fee', D: '-563.1218652', E: '-88.63110275', F: '-66.66557925', G: '-281.5814528', H: '-1000', I: 'Total Management Fees' },
  23: { D: '55968.73813', E: '8809.058897', F: '6625.894421', G: '27986.40855', H: '99390.1' },
  26: { B: 'GROSS ASSETS AT END OF CURRENT MONTH', D: '455875.5928', E: '71751.35917', F: '53969.14951', G: '227954.4085', H: '809550.51', I: 'Gross Asset Value (Closing)' },
  29: { B: 'Number of Shares Outstanding at End of Prior Period', D: '9916.019', E: '69.98', F: '49.96', G: '0', H: '10035.959', I: 'Units (Opening)' },
  31: { B: 'Net Subs/Reds', D: '0', E: '0', F: '0', G: '199.968', H: '199.968', I: 'Added Units' },
  33: { B: 'Number of Shares Outstanding at End of Current Period', D: '9916.019', E: '69.98', F: '49.96', G: '199.968', H: '10235.927' },
  37: { B: 'NET ASSETS AT END OF CURRENT MONTH', D: '455875.5928', E: '71751.35917', F: '53969.14951', G: '227954.4085', H: '809550.51', I: 'Net Asset Value(Closing)' },
  41: { B: 'Number of Shares Outstanding at End of Current Period', D: '9916.019', E: '69.98', F: '49.96', G: '199.968', I: 'Units(Closing)' },
  43: { B: 'NET ASSET VALUE PER SHARE', D: '45.97', E: '1025.31', F: '1080.25', G: '1139.95', I: 'NAV per unit' },
  47: { B: 'Management fee Calculation' },
  49: { B: 'Management Fee Basis' },
  50: { B: 'Closing SGF NAV - Previous Month', C: '510192.41' },
  51: { B: 'Capital', C: '199968', D: '41876', E: '7' },
  52: { C: '0', D: '41852', E: '31' },
  53: { C: '0' },
  54: { C: '0' },
  55: { C: '710160.41' },
  56: { B: 'PLEASE NOTE:' },
  57: { B: 'Monthly Management Fee - Manual\u00a0 Calcs', C: '347.0915466' },
  58: { C: '1000', D: 'Minimum Fee' }
};
const body = document.getElementById('rows');
for (let n = 1; n <= 58; n++) {
  const row = body.insertRow();
  const data = cells[n] || {};
  const head = document.createElement('th');
  const box = document.createElement('div');
  box.textContent = n;
  box.style.height = (heights[n] || 14) - 1 + 'px';
  head.append(box);
  row.append(head);
  for (const name of names) {
    if (name === 'B' && data.A) continue;
    const cell = row.insertCell();
    const value = data[name] || '';
    if (name === 'A' && data.A) cell.colSpan = 2;
    cell.textContent = value;
    cell.className = !value ? 'z' : /[A-Za-z]/.test(value) ? 't' : '';
  }
  if (n === 1) {
    const off = row.insertCell();
    off.colSpan = 8;
    off.rowSpan = 58;
    off.className = 'off';
  }
}
```
